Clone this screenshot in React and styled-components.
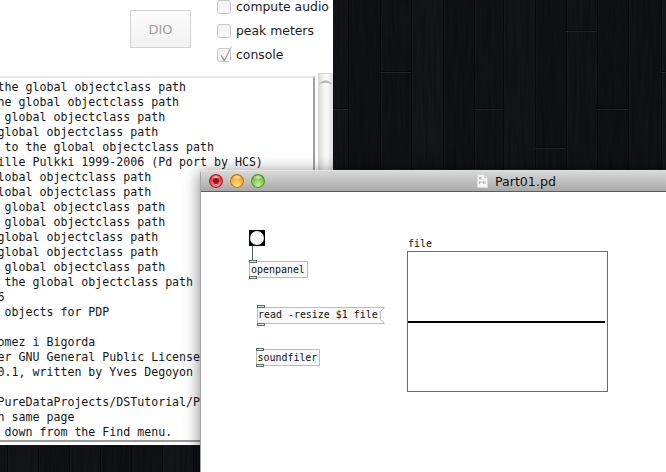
import React from "react";
import styled, { createGlobalStyle } from "styled-components";

const Global = createGlobalStyle`
  html, body { margin: 0; padding: 0; background: #131417; overflow: hidden; }
`;

const MONO = `"DejaVu Sans Mono", "Liberation Mono", monospace`;
const UI = `"DejaVu Sans", "Noto Sans", sans-serif`;

const Desktop = styled.div`
  position: relative;
  width: 666px;
  height: 472px;
  overflow: hidden;
  background: #131417;
`;
const WallpaperSvg = styled.svg`
  position: absolute;
  inset: 0;
  display: block;
`;

const ConsoleWindow = styled.section`
  position: absolute;
  left: 0;
  top: 0;
  width: 333px;
  height: 445px;
  display: flex;
  flex-direction: column;
  background: #fff;
`;
const Toolbar = styled.div`
  height: 76px;
  flex: none;
  display: flex;
  justify-content: flex-end;
  align-items: flex-start;
  gap: 26px;
`;
const DioButton = styled.div`
  box-sizing: border-box;
  width: 61px;
  height: 38px;
  margin-top: 10px;
  display: flex;
  align-items: center;
  justify-content: center;
  border: 1px solid #d2d2d2;
  background: linear-gradient(#fcfcfc, #f1f1f1);
  color: #a0a0a0;
  font: 13px ${UI};
`;
const Options = styled.div`
  width: 116px;
  margin-top: -5px;
  display: flex;
  flex-direction: column;
`;
const Option = styled.label`
  height: 24px;
  display: flex;
  align-items: center;
  gap: 5px;
  color: #1c1c1c;
  font: 12.4px/24px ${UI};
  white-space: nowrap;
`;
const Box = styled.span`
  position: relative;
  box-sizing: border-box;
  flex: none;
  width: 14px;
  height: 14px;
  border: 1px solid #c9c9c9;
  border-radius: 3px;
  background: linear-gradient(#f2f2f2, #fafafa);
`;
const CheckMark = styled.svg`
  position: absolute;
  left: 1px;
  top: -5px;
`;
const ConsoleBody = styled.div`
  flex: 1;
  min-height: 0;
  display: flex;
  gap: 3px;
`;
const Log = styled.div`
  box-sizing: border-box;
  width: 315px;
  height: 366px;
  padding-top: 2px;
  overflow: hidden;
  border-top: 2px solid #e6e6e6;
  border-right: 2px solid #a0a0a0;
  border-bottom: 2px solid #9a9a9a;
  background: #fff;
`;
const LogLine = styled.div`
  height: 15px;
  margin-left: -2.4px;
  color: #161616;
  font: 11.6px/15px ${MONO};
  white-space: pre;
`;
const Scrollbar = styled.div`
  position: relative;
  width: 15px;
  flex: none;
  margin-top: -3px;
  box-sizing: border-box;
  border-top: 1px solid #d4d4d4;
  background: linear-gradient(90deg, #d6d6d6, #f4f4f4 40%, #fbfbfb 60%, #dcdcdc);
`;
const ScrollCap = styled.svg`
  position: absolute;
  left: 0;
  top: 3px;
`;

const PdWindow = styled.section`
  position: absolute;
  left: 200px;
  top: 170px;
  width: 480px;
  height: 320px;
  display: flex;
  flex-direction: column;
  box-sizing: border-box;
  border-left: 1px solid #a5a5a5;
  border-radius: 4px 0 0 0;
  background: #fff;
  box-shadow: 0 2px 16px rgba(0, 0, 0, 0.5);
`;
const TitleBar = styled.header`
  position: relative;
  height: 22px;
  flex: none;
  box-sizing: border-box;
  display: flex;
  align-items: center;
  padding-left: 276px;
  gap: 7px;
  border-top: 1px solid #e4e4e4;
  border-bottom: 1px solid #5c5c5c;
  border-radius: 4px 0 0 0;
  background: linear-gradient(#d8d8d8, #a9a9a9);
`;
const Lights = styled.div`
  position: absolute;
  left: 8px;
  top: 3px;
  display: flex;
  gap: 7px;
`;
const Light = styled.span`
  width: 14px;
  height: 14px;
  border-radius: 50%;
  box-shadow: inset 0 0 0 1px ${(p) => p.$edge};
  background:
    radial-gradient(ellipse 5px 3px at 50% 22%, rgba(255, 255, 255, 0.75), rgba(255, 255, 255, 0) 100%),
    radial-gradient(circle at 50% 80%, ${(p) => p.$glow} 0%, ${(p) => p.$base} 62%, ${(p) => p.$edge} 100%);
`;
const LightHub = styled.span`
  display: block;
  width: 6px;
  height: 6px;
  margin: 4px;
  border-radius: 50%;
  background: ${(p) => p.$color};
`;
const Title = styled.span`
  color: #111;
  font: 12.6px ${UI};
`;
const Canvas = styled.div`
  position: relative;
  flex: 1;
  background: #fff;
`;
const PdBox = styled.div`
  position: absolute;
  box-sizing: border-box;
  left: ${(p) => p.$x}px;
  top: ${(p) => p.$y}px;
  width: ${(p) => p.$w}px;
  height: 17px;
  padding-left: ${(p) => p.$pad ?? 1}px;
  border: ${(p) => (p.$bare ? "none" : "1px solid #bcbcbc")};
  background: ${(p) => (p.$bare ? "transparent" : "#f9f9f9")};
  color: #111;
  font: 9.95px/16px ${MONO};
  white-space: pre;
`;
const MessageOutline = styled.svg`
  position: absolute;
  left: 0;
  top: 0;
`;
const MessageText = styled.span`
  position: relative;
`;
const Port = styled.span`
  position: absolute;
  box-sizing: border-box;
  left: ${(p) => p.$left ?? -1}px;
  ${(p) => (p.$bottom ? "bottom: -2px;" : "top: -2px;")}
  width: 8px;
  height: 3px;
  border: 1px solid #5b6d62;
  background: #e8ece8;
`;
const Bang = styled.div`
  position: absolute;
  box-sizing: border-box;
  left: 48px;
  top: 38px;
  width: 16px;
  height: 16px;
  padding: 1px;
  background: #000;
`;
const BangFace = styled.div`
  width: 14px;
  height: 14px;
  border-radius: 50%;
  background: #f4f4f4;
`;
const Wire = styled.div`
  position: absolute;
  left: 51px;
  top: 54px;
  width: 1px;
  height: 15px;
  background: #4d6156;
`;
const ArrayLabel = styled.div`
  position: absolute;
  left: 207px;
  top: 46px;
  color: #111;
  font: 9.95px/12px ${MONO};
`;
const Graph = styled.div`
  position: absolute;
  box-sizing: border-box;
  left: 206px;
  top: 59px;
  width: 201px;
  height: 141px;
  display: flex;
  align-items: center;
  border: 1px solid #6b6b6b;
  background: #fff;
`;
const Waveform = styled.div`
  width: 197px;
  height: 2px;
  background: #000;
`;

const planks = [7, 38, 69, 100, 131, 162, 193, 224, 255, 286, 317, 348, 380, 411, 443, 474, 503, 535, 566, 597, 628, 661];
const tones = ["#141519", "#111215", "#131418", "#101114", "#121317", "#15161a", "#111216", "#121317"];
const joints = [
  [333, 348, 108], [380, 411, 71], [474, 503, 108], [535, 566, 147],
  [566, 597, 30], [597, 628, 108], [661, 692, 71],
];

const Wallpaper = () => (
  <WallpaperSvg width="666" height="472" viewBox="0 0 666 472">
    <defs>
      <filter id="grain" x="0" y="0" width="100%" height="100%">
        <feTurbulence type="fractalNoise" baseFrequency="0.35 0.02" numOctaves="3" seed="7" />
        <feColorMatrix values="0 0 0 0 0  0 0 0 0 0  0 0 0 0 0  1.6 0 0 0 -0.55" />
      </filter>
    </defs>
    {planks.map((x, i) => (
      <g key={x}>
        <rect x={x} y="0" width={(planks[i + 1] ?? 692) - x} height="472" fill={tones[i % tones.length]} />
        <rect x={x} y="0" width="1" height="472" fill="#0a0a0c" />
        <rect x={x + 1} y="0" width="1" height="472" fill="#25262a" opacity="0.2" />
      </g>
    ))}
    <rect x="0" y="0" width="666" height="472" filter="url(#grain)" opacity="0.3" />
    {joints.map(([a, b, y]) => (
      <g key={`${a}-${y}`}>
        <rect x={a} y={y} width={b - a} height="1" fill="#08080a" />
        <rect x={a} y={y + 1} width={b - a} height="1" fill="#232428" />
      </g>
    ))}
  </WallpaperSvg>
);

const lines = [
  "the global objectclass path",
  "he global objectclass path",
  " global objectclass path",
  "global objectclass path",
  " to the global objectclass path",
  "ille Pulkki 1999-2006 (Pd port by HCS)",
  "lobal objectclass path",
  "lobal objectclass path",
  " global objectclass path",
  " global objectclass path",
  "global objectclass path",
  "global objectclass path",
  " global objectclass path",
  " the global objectclass path",
  "6",
  " objects for PDP",
  "",
  "omez i Bigorda",
  "er GNU General Public License",
  "0.1, written by Yves Degoyon",
  "",
  "PureDataProjects/DSTutorial/Part01.pd",
  "n same page",
  " down from the Find menu.",
];

const Check = () => (
  <CheckMark width="14" height="18" viewBox="0 0 14 18">
    <path d="M2 10.5 L5.6 15 L12.5 1.5 L12.5 3 L6 17 L4.6 17 L1.5 11.5 Z" fill="#9a9a9a" />
  </CheckMark>
);

const DocIcon = () => (
  <svg width="11" height="14" viewBox="0 0 11 14">
    <path d="M0.5 0.5 H7.5 L10.5 3.5 V13.5 H0.5 Z" fill="#f6f6f6" stroke="#d8d8d8" />
    <path d="M7.5 0.5 V3.5 H10.5" fill="#e2e2e2" stroke="#cfcfcf" />
    <rect x="2" y="3" width="2.5" height="2.5" fill="#9ccf9c" />
    <path d="M2.5 10 V7 L4.5 9 L6.5 7 V10 M8 7 V10" fill="none" stroke="#b8b8b8" />
  </svg>
);

export default function App() {
  return (
    <Desktop>
      <Global />
      <Wallpaper />
      <ConsoleWindow>
        <Toolbar>
          <DioButton>DIO</DioButton>
          <Options>
            <Option><Box />compute audio</Option>
            <Option><Box />peak meters</Option>
            <Option><Box><Check /></Box>console</Option>
          </Options>
        </Toolbar>
        <ConsoleBody>
          <Log>
            {lines.map((line, i) => (
              <LogLine key={i}>{line}</LogLine>
            ))}
          </Log>
          <Scrollbar>
            <ScrollCap width="15" height="10" viewBox="0 0 15 10">
              <path d="M1 8 C3 2 12 2 14 8 C11 5 4 5 1 8 Z" fill="#b4b4b4" />
            </ScrollCap>
          </Scrollbar>
        </ConsoleBody>
      </ConsoleWindow>
      <PdWindow>
        <TitleBar>
          <Lights>
            <Light $base="#e8303a" $glow="#ff9aa0" $edge="#a31a22"><LightHub $color="#8f1420" /></Light>
            <Light $base="#f4a11e" $glow="#ffe58a" $edge="#b56f10" />
            <Light $base="#6fbb3a" $glow="#c8f29a" $edge="#4a8a24" />
          </Lights>
          <DocIcon />
          <Title>Part01.pd</Title>
        </TitleBar>
        <Canvas>
          <Bang><BangFace /></Bang>
          <Wire />
          <PdBox $x={48} $y={69} $w={59}>openpanel<Port /><Port $bottom /></PdBox>
          <PdBox $x={56} $y={115} $w={128} $bare $pad={1}>
            <MessageOutline width="128" height="17" viewBox="0 0 128 17">
              <path d="M0.5 0.5 H127.5 L123.5 4.5 V12.5 L127.5 16.5 H0.5 Z" fill="#f9f9f9" stroke="#bcbcbc" />
            </MessageOutline>
            <MessageText>read -resize $1 file</MessageText>
            <Port $left={0} />
            <Port $left={0} $bottom />
          </PdBox>
          <PdBox $x={54.5} $y={157} $w={64}>soundfiler<Port /><Port $bottom /></PdBox>
          <ArrayLabel>file</ArrayLabel>
          <Graph><Waveform /></Graph>
        </Canvas>
      </PdWindow>
    </Desktop>
  );
}
